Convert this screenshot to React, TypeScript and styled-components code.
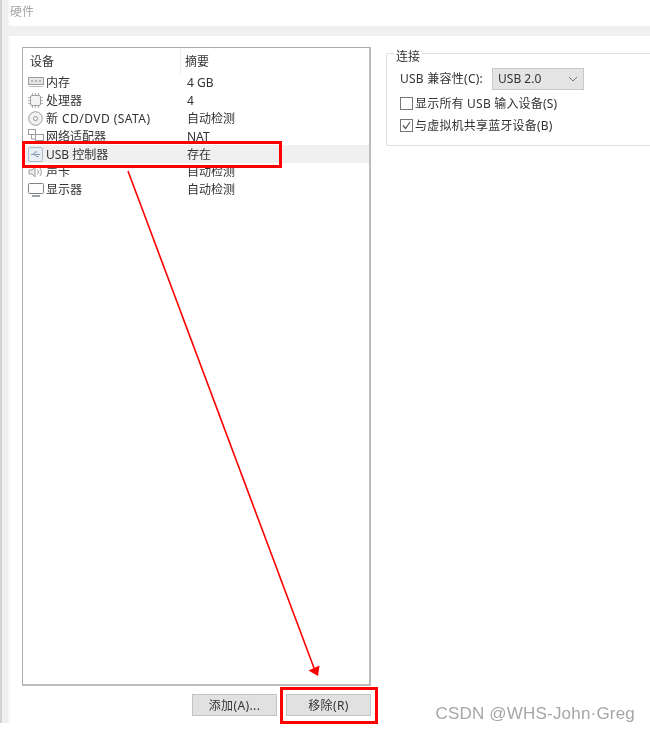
import React from 'react';
import styled, { createGlobalStyle } from 'styled-components';

const GlobalStyle = createGlobalStyle`
  html, body {
    margin: 0;
    padding: 0;
    background: #fff;
  }
`;

const devices = [
  { name: '内存', summary: '4 GB', icon: 'memory' },
  { name: '处理器', summary: '4', icon: 'cpu' },
  { name: '新 CD/DVD (SATA)', summary: '自动检测', icon: 'disc', tracking: 0.45 },
  { name: '网络适配器', summary: 'NAT', icon: 'network' },
  { name: 'USB 控制器', summary: '存在', icon: 'usb', selected: true },
  { name: '声卡', summary: '自动检测', icon: 'sound' },
  { name: '显示器', summary: '自动检测', icon: 'display' },
];

const DeviceIcon = ({ type }: { type: string }) => {
  const stroke = '#9a9ea2';
  switch (type) {
    case 'memory':
      return (
        <svg width="16" height="11" viewBox="0 0 16 11" fill="none">
          <rect x="0.5" y="0.5" width="15" height="7" fill="#e6e6e6" stroke={stroke} />
          <path d="M3 3h2v2H3zM7 3h2v2H7zM11 3h2v2h-2z" fill="#b4b8bc" />
          <path d="M1 9.500h14" stroke="#bdbdbd" />
        </svg>
      );
    case 'cpu':
      return (
        <svg width="15" height="15" viewBox="0 0 15 15" fill="none">
          <rect x="2.5" y="2.5" width="10" height="10" rx="1.500" fill="#f4f4f4" stroke={stroke} />
          <path d="M4.500 0v2M7.500 0v2M10.500 0v2M4.500 13v2M7.500 13v2M10.500 13v2M0 4.500h2M0 7.500h2M0 10.500h2M13 4.500h2M13 7.500h2M13 10.500h2" stroke="#b5b5b5" strokeWidth="1.200" />
        </svg>
      );
    case 'disc':
      return (
        <svg width="15" height="15" viewBox="0 0 15 15" fill="none">
          <circle cx="7.500" cy="7.500" r="6.800" fill="#f1f1f1" stroke={stroke} />
          <circle cx="7.500" cy="7.500" r="2" fill="#fff" stroke="#8d9195" />
        </svg>
      );
    case 'network':
      return (
        <svg width="16" height="14" viewBox="0 0 16 14" fill="none">
          <rect x="0.500" y="0.500" width="7" height="5" fill="#fff" stroke={stroke} />
          <rect x="7.500" y="5.500" width="8" height="6" fill="#fff" stroke={stroke} />
          <path d="M3.500 6v4h4" stroke={stroke} />
        </svg>
      );
    case 'usb':
      return (
        <svg width="15" height="15" viewBox="0 0 15 15" fill="none">
          <rect x="0.500" y="0.500" width="14" height="14" rx="1.500" fill="#e9eff5" stroke="#a9bccd" />
          <path d="M3 7.500h9M4.500 7.500l3-2.500h2M7 7.500l1.500 2h2" stroke="#8298ac" />
        </svg>
      );
    case 'sound':
      return (
        <svg width="15" height="12" viewBox="0 0 15 12" fill="none">
          <path d="M1 4h3l3-3v10L4 8H1z" fill="#ececec" stroke={stroke} />
          <path d="M9.500 3.500c1 1.500 1 3.500 0 5M12 2c1.700 2.500 1.700 5.500 0 8" stroke={stroke} />
        </svg>
      );
    default:
      return (
        <svg width="16" height="14" viewBox="0 0 16 14" fill="none">
          <rect x="0.500" y="0.500" width="15" height="10" rx="1" fill="#fdfdfd" stroke="#7d8286" />
          <path d="M4 13h8" stroke="#7d8286" strokeWidth="1.500" />
        </svg>
      );
  }
};

const App = () => (
  <Page>
    <GlobalStyle />
    <Rail />
    <Main>
      <TitleBar>硬件</TitleBar>
      <Strip />
      <Content>
        <LeftColumn>
          <ListBox>
            <HeaderRow>
              <HeaderName>设备</HeaderName>
              <HeaderSummary>摘要</HeaderSummary>
            </HeaderRow>
            {devices.map((d) => (
              <DeviceRow key={d.name} $selected={d.selected}>
                <IconSlot>
                  <DeviceIcon type={d.icon} />
                </IconSlot>
                <DeviceName $tracking={d.tracking}>{d.name}</DeviceName>
                <DeviceSummary>{d.summary}</DeviceSummary>
              </DeviceRow>
            ))}
          </ListBox>
          <ButtonRow>
            <ActionButton>添加(A)...</ActionButton>
            <ActionButton>移除(R)</ActionButton>
          </ButtonRow>
        </LeftColumn>
        <RightColumn>
          <GroupBox>
            <Legend>连接</Legend>
            <CompatRow>
              <CompatLabel>USB 兼容性(C):</CompatLabel>
              <Select>
                USB 2.0
                <svg width="10" height="6" viewBox="0 0 10 6" fill="none">
                  <path d="M1 1l4 4 4-4" stroke="#777" />
                </svg>
              </Select>
            </CompatRow>
            <CheckRow $gap={3}>
              <CheckBox />
              显示所有 USB 输入设备(S)
            </CheckRow>
            <CheckRow $gap={1}>
              <CheckBox>
                <svg width="11" height="11" viewBox="0 0 11 11" fill="none">
                  <path d="M2 5.500l2.500 3L9 2" stroke="#555" strokeWidth="1.200" />
                </svg>
              </CheckBox>
              与虚拟机共享蓝牙设备(B)
            </CheckRow>
          </GroupBox>
        </RightColumn>
      </Content>
    </Main>
    <RowHighlight />
    <ButtonHighlight />
    <Arrow width="650" height="733" viewBox="0 0 650 733">
      <path d="M128 171L314 668" stroke="#f00" strokeWidth="1.600" fill="none" />
      <path d="M318 676L308.500 670.500L319.500 665.500z" fill="#f00" />
    </Arrow>
    <Watermark>CSDN @WHS-John·Greg</Watermark>
  </Page>
);

const uiFont = `"Noto Sans", "Noto Sans CJK SC", sans-serif`;

const Page = styled.div`
  position: relative;
  display: flex;
  align-items: flex-start;
  width: 650px;
  height: 733px;
  overflow: hidden;
  background: #fff;
  font-family: ${uiFont};
  font-size: 12px;
  line-height: 16px;
  color: #333;
  filter: blur(0.5px);
`;

const Rail = styled.div`
  width: 8px;
  height: 723px;
  flex-shrink: 0;
  box-sizing: border-box;
  border-left: 2px solid #d2d2d2;
  background: #efefef;
  box-shadow: 2px 0 0 #f8f8f8;
`;

const Main = styled.div`
  width: 642px;
  flex-shrink: 0;
`;

const TitleBar = styled.div`
  height: 24px;
  padding: 0 0 2px 2px;
  display: flex;
  align-items: center;
  font-size: 12px;
  color: #a8a8a8;
`;

const Strip = styled.div`
  height: 10px;
  background: #f0f0f0;
`;

const Content = styled.div`
  display: flex;
  height: 697px;
`;

const LeftColumn = styled.div`
  width: 378px;
  flex-shrink: 0;
  padding: 11px 0 0 14px;
  box-sizing: border-box;
`;

const ListBox = styled.div`
  width: 349px;
  height: 639px;
  box-sizing: border-box;
  border: 1px solid #a9adb2;
  border-right: 2px solid #b9bdc2;
  border-bottom: 2px solid #b9bdc2;
  background: #fff;
`;

const HeaderRow = styled.div`
  display: flex;
  height: 26px;
  align-items: center;
`;

const HeaderName = styled.div`
  width: 158px;
  padding: 1px 0 0 7px;
  box-sizing: border-box;
  height: 100%;
  display: flex;
  align-items: center;
  border-right: 1px solid #eeeeee;
`;

const HeaderSummary = styled.div`
  padding: 1px 0 0 4px;
`;

const DeviceRow = styled.div<{ $selected?: boolean }>`
  display: flex;
  align-items: center;
  height: 17.800px;
  background: ${(p) => (p.$selected ? '#f0f0f0' : 'transparent')};
`;

const IconSlot = styled.div`
  width: 23px;
  padding-left: 5px;
  box-sizing: border-box;
  flex-shrink: 0;
  display: flex;
  align-items: center;
`;

const DeviceName = styled.div<{ $tracking?: number }>`
  width: 141px;
  padding-top: 1px;
  white-space: nowrap;
  letter-spacing: ${(p) => p.$tracking ?? 0}px;
`;

const DeviceSummary = styled.div`
  padding-top: 1px;
`;

const ButtonRow = styled.div`
  display: flex;
  gap: 9px;
  padding: 8px 0 0 170px;
`;

const ActionButton = styled.button`
  width: 85px;
  height: 22px;
  padding: 2px 0 0;
  border: 1px solid #c4c4c4;
  background: #e1e1e1;
  font-family: ${uiFont};
  font-size: 12px;
  line-height: 16px;
  letter-spacing: 0.4px;
  color: #333;
`;

const RightColumn = styled.div`
  flex: 1;
  padding-top: 17px;
`;

const GroupBox = styled.div`
  position: relative;
  height: 93px;
  box-sizing: border-box;
  padding: 14px 0 0 13px;
  border: 1px solid #e0e0e0;
  border-right: 0;
  border-radius: 2px 0 0 2px;
  display: flex;
  flex-direction: column;
`;

const Legend = styled.div`
  position: absolute;
  top: -5px;
  left: 7px;
  padding: 0 2px;
  background: #fff;
`;

const CompatRow = styled.div`
  display: flex;
  align-items: center;
  gap: 9px;
  height: 22px;
  white-space: nowrap;
`;

const CompatLabel = styled.span`
  letter-spacing: 0.25px;
`;

const Select = styled.div`
  width: 92px;
  height: 22px;
  box-sizing: border-box;
  padding: 0 5px;
  display: flex;
  align-items: center;
  justify-content: space-between;
  background: #e4e4e4;
  border: 1px solid #c9c9c9;
`;

const CheckRow = styled.div<{ $gap: number }>`
  display: flex;
  align-items: center;
  gap: 2px;
  height: 21px;
  margin-top: ${(p) => p.$gap}px;
  letter-spacing: 0.2px;
  white-space: nowrap;
`;

const CheckBox = styled.span`
  width: 13px;
  height: 13px;
  box-sizing: border-box;
  border: 1px solid #777;
  display: flex;
  align-items: center;
  justify-content: center;
  background: #fff;
`;

const RowHighlight = styled.div`
  position: absolute;
  left: 22px;
  top: 141px;
  width: 260px;
  height: 27px;
  box-sizing: border-box;
  border: 3px solid #f00;
`;

const ButtonHighlight = styled.div`
  position: absolute;
  left: 280px;
  top: 687px;
  width: 98px;
  height: 37px;
  box-sizing: border-box;
  border: 3px solid #f00;
`;

const Arrow = styled.svg`
  position: absolute;
  left: 0;
  top: 0;
  pointer-events: none;
`;

const Watermark = styled.div`
  position: absolute;
  right: 15px;
  top: 704px;
  font-family: "Liberation Sans", sans-serif;
  font-size: 17px;
  line-height: 20px;
  letter-spacing: 0.2px;
  color: #a6a6a6;
`;

export default App;
